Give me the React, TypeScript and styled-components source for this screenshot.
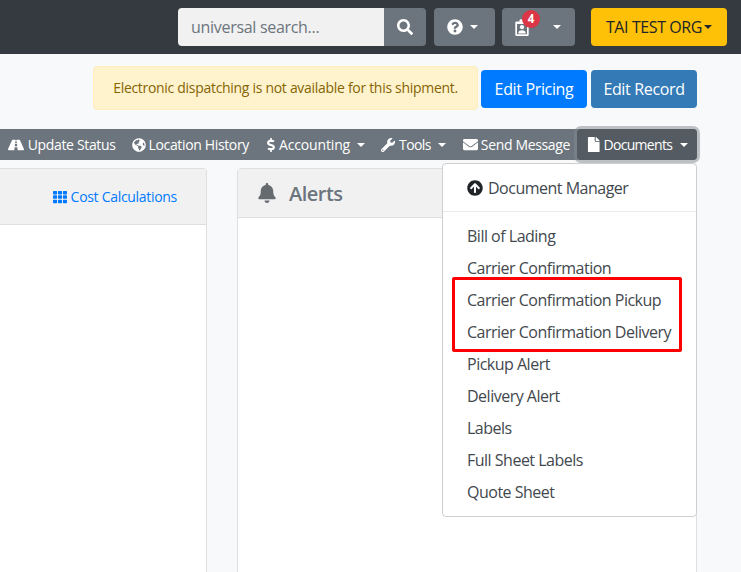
import React from 'react';
import styled, { createGlobalStyle } from 'styled-components';
import { FaSearch, FaQuestionCircle, FaRoad, FaGlobeAmericas, FaDollarSign, FaWrench, FaEnvelope, FaFile, FaTh, FaBell, FaArrowCircleUp } from 'react-icons/fa';

const Global = createGlobalStyle`
  html, body { margin: 0; padding: 0; height: 100%; overflow: hidden; background: #f8f9fa; }
  body { font-family: "Open Sans", "Noto Sans", "Liberation Sans", sans-serif; color: #212529; }
  * { box-sizing: border-box; }
`;
const Page = styled.div`height: 572px; overflow: hidden; position: relative; letter-spacing: -0.35px;`;
const Header = styled.header`
  height: 54px; background: #343a40; display: flex; align-items: center; justify-content: flex-end; padding: 0 14px 0 0;
`;
const SearchGroup = styled.div`display: flex; height: 38px; margin-right: 8px;`;
const SearchInput = styled.div`
  width: 206px; background: #f1f1f1; border-radius: 4px 0 0 4px; color: #6c757d; font-size: 16px; line-height: 38px; padding-left: 13px; letter-spacing: -0.3px;
`;
const SearchButton = styled.div`
  width: 42px; background: #6c757d; border-radius: 0 4px 4px 0; color: #fff; display: flex; align-items: center; justify-content: center; font-size: 16px;
`;
const HeadButton = styled.div<{ $w: number; $mr: number }>`
  position: relative; width: ${p => p.$w}px; height: 38px; margin-right: ${p => p.$mr}px; background: #6c757d; border-radius: 4px; color: #fff;
  display: flex; align-items: center; padding-left: 13px; font-size: 16px;
`;
const Caret = styled.span<{ $ml?: number; $c?: string }>`
  display: inline-block; width: 0; height: 0; margin-left: ${p => p.$ml ?? 7}px; border-top: 4.8px solid ${p => p.$c ?? '#fff'}; border-left: 4.8px solid transparent; border-right: 4.8px solid transparent;
`;
const Badge = styled.span`
  position: absolute; left: 20px; top: 2px; width: 18px; height: 18px; border-radius: 50%; background: #dc3545; color: #fff; font-size: 11.5px; font-weight: 700; line-height: 18px; text-align: center; letter-spacing: 0;
`;
const OrgButton = styled.div`
  width: 136px; height: 38px; background: #ffc107; border-radius: 4px; color: #212529; font-size: 16px; display: flex; align-items: center; justify-content: center; white-space: nowrap; letter-spacing: -0.4px;
`;
const ActionRow = styled.div`
  height: 75px; padding: 12px 44px 0 0; display: flex; justify-content: flex-end; align-items: flex-start; gap: 3px;
`;
const Notice = styled.div`
  width: 385px; height: 44px; background: #fff3cd; border: 1px solid #ffeeba; border-radius: 4px; color: #856404; font-size: 14px; line-height: 42px; text-align: center; white-space: nowrap; letter-spacing: -0.3px;
`;
const ActionButton = styled.div<{ $bg: string; $ml?: number }>`
  width: 106px; height: 38px; margin-top: 4px; margin-left: ${p => p.$ml ?? 0}px; background: ${p => p.$bg}; border-radius: 4px; color: #fff; font-size: 16px; line-height: 38px; text-align: center; white-space: nowrap;
`;
const Toolbar = styled.nav`
  width: 697px; height: 31px; background: #6c757d; display: flex; justify-content: flex-end; position: relative; border-radius: 0 4px 4px 0;
`;
const ToolButton = styled.div`
  height: 31px; display: flex; align-items: center; padding: 0 8px; color: #fff; font-size: 14px; white-space: nowrap; gap: 3px; flex: none;
`;
const AccountingButton = styled(ToolButton)`padding-left: 7px;`;
const ToolsButton = styled(ToolButton)`padding-right: 9px; gap: 4px;`;
const SendButton = styled(ToolButton)`padding-right: 7px;`;
const DocumentsButton = styled(ToolButton)`
  width: 120px; padding-left: 9px; gap: 2px; background: #545b62; border-radius: 4px; box-shadow: 0 0 0 3px rgba(130,138,145,.5); letter-spacing: -0.7px;
`;
const RoadIcon = styled(FaRoad)`font-size: 16px; margin-right: 1px;`;
const DollarIcon = styled(FaDollarSign)`margin-right: -2px;`;
const EnvelopeIcon = styled(FaEnvelope)`font-size: 15px;`;
const DocIcon = styled(FaFile)`font-size: 15.5px;`;
const AccountingLabel = styled.span`letter-spacing: -0.15px;`;
const ToolsLabel = styled.span`letter-spacing: -0.6px;`;
const DocCaret = styled(Caret)`margin-left: 6px;`;
const Content = styled.div`
  display: flex; gap: 30px; padding: 8px 44px 0 0; align-items: flex-start;
`;
const Panel = styled.section<{ $w?: number }>`
  ${p => p.$w ? `flex: 0 0 ${p.$w}px;` : 'flex: 1;'}
  height: 500px; background: #fff; border: 1px solid #dfdfdf; border-radius: 4px;
  ${p => p.$w ? 'border-left: 0; border-radius: 0 4px 4px 0;' : ''}
`;
const CalcHead = styled.div`
  height: 56px; background: #f1f1f1; border-bottom: 1px solid #dfdfdf; display: flex; align-items: center; justify-content: flex-end; padding: 0 29px 0 0; color: #007bff; font-size: 14px; gap: 4px; letter-spacing: -0.3px;
`;
const AlertsHead = styled.div`
  height: 49px; background: #f1f1f1; border-bottom: 1px solid #dfdfdf; display: flex; align-items: center; padding-left: 19px; color: #6c757d; font-size: 20px; font-weight: 600; gap: 12px; letter-spacing: -0.5px;
`;
const BellIcon = styled(FaBell)`color: #666b70;`;
const Menu = styled.div`
  position: absolute; left: 442px; top: 163px; width: 255px; height: 354px; background: #fff; border: 1px solid #cfcfcf; border-radius: 4px; padding: 8px 0; z-index: 2;
`;
const MenuItem = styled.div`
  height: 32px; line-height: 32px; padding-left: 24px; font-size: 16px; color: #42484e; white-space: nowrap; display: flex; align-items: center; gap: 5px; letter-spacing: -0.5px;
`;
const ManagerIcon = styled(FaArrowCircleUp)`color: #212529;`;
const MenuDivider = styled.div`height: 1px; background: #e9ecef; margin: 7px 0 8px;`;
const Highlight = styled.div`
  position: absolute; left: 452px; top: 277px; width: 230px; height: 75px; border: 3px solid #f00; border-radius: 2px; z-index: 3; pointer-events: none;
`;

const ClipboardUser = () => (
  <svg width="14" height="17" viewBox="0 0 14 17" aria-hidden="true">
    <path d="M1.5 2.5H4.5V1.5a1.2 1.2 0 0 1 1.2-1.2h2.6a1.2 1.2 0 0 1 1.2 1.2v1h3a1.2 1.2 0 0 1 1.2 1.2v12a1.2 1.2 0 0 1-1.2 1.2H1.5a1.2 1.2 0 0 1-1.2-1.2v-12a1.2 1.2 0 0 1 1.2-1.2zM2 5v10.3h10V5z" fill="#fff" fillRule="evenodd" />
    <circle cx="7" cy="8.2" r="2.1" fill="#fff" />
    <path d="M3.2 14.6c0-2.1 1.5-3.3 3.8-3.3s3.8 1.2 3.8 3.3z" fill="#fff" />
  </svg>
);

const docs = ['Bill of Lading', 'Carrier Confirmation', 'Carrier Confirmation Pickup', 'Carrier Confirmation Delivery', 'Pickup Alert', 'Delivery Alert', 'Labels', 'Full Sheet Labels', 'Quote Sheet'];

export default function App() {
  return (
    <Page>
      <Global />
      <Header>
        <SearchGroup>
          <SearchInput>universal search...</SearchInput>
          <SearchButton><FaSearch /></SearchButton>
        </SearchGroup>
        <HeadButton $w={61} $mr={7}>
          <FaQuestionCircle /><Caret />
        </HeadButton>
        <HeadButton $w={73} $mr={16}>
          <ClipboardUser /><Badge>4</Badge><Caret $ml={24} />
        </HeadButton>
        <OrgButton>TAI TEST ORG<Caret $ml={2} $c="#212529" /></OrgButton>
      </Header>
      <ActionRow>
        <Notice>Electronic dispatching is not available for this shipment.</Notice>
        <ActionButton $bg="#007bff">Edit Pricing</ActionButton>
        <ActionButton $bg="#337ab7" $ml={1}>Edit Record</ActionButton>
      </ActionRow>
      <Toolbar>
        <ToolButton><RoadIcon />Update Status</ToolButton>
        <ToolButton><FaGlobeAmericas />Location History</ToolButton>
        <AccountingButton><DollarIcon /><AccountingLabel>Accounting</AccountingLabel><Caret $ml={4} /></AccountingButton>
        <ToolsButton><FaWrench /><ToolsLabel>Tools</ToolsLabel><Caret $ml={3} /></ToolsButton>
        <SendButton><EnvelopeIcon />Send Message</SendButton>
        <DocumentsButton><DocIcon />Documents<DocCaret /></DocumentsButton>
      </Toolbar>
      <Content>
        <Panel $w={207}>
          <CalcHead><FaTh />Cost Calculations</CalcHead>
        </Panel>
        <Panel>
          <AlertsHead><BellIcon />Alerts</AlertsHead>
        </Panel>
      </Content>
      <Menu>
        <MenuItem><ManagerIcon />Document Manager</MenuItem>
        <MenuDivider />
        {docs.map(d => <MenuItem key={d}>{d}</MenuItem>)}
      </Menu>
      <Highlight />
    </Page>
  );
}
